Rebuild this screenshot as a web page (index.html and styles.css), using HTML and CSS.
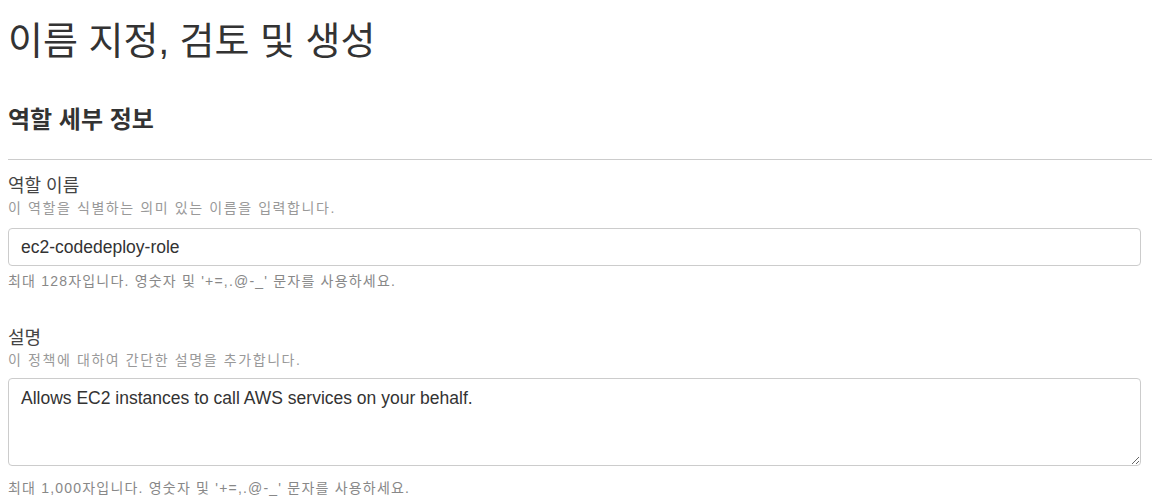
FILE: index.html
```html
<!DOCTYPE html>
<html lang="ko">
<head>
    <meta charset="UTF-8">
    <title>역할 생성</title>
    <link rel="stylesheet" href="styles.css">
</head>
<body>
<div class="page">
    <h1 class="page-title">이름 지정, 검토 및 생성</h1>
    <h2 class="section-title">역할 세부 정보</h2>
    <hr class="divider">
    <div class="field">
        <label class="field-label" for="roleName">역할 이름</label>
        <div class="field-desc">이 역할을 식별하는 의미 있는 이름을 입력합니다.</div>
        <input class="text-input" id="roleName" type="text" value="ec2-codedeploy-role">
        <div class="field-hint">최대 128자입니다. 영숫자 및 '+=,.@-_' 문자를 사용하세요.</div>
    </div>
    <div class="field">
        <label class="field-label" for="roleDesc">설명</label>
        <div class="field-desc">이 정책에 대하여 간단한 설명을 추가합니다.</div>
        <textarea class="text-area" id="roleDesc">Allows EC2 instances to call AWS services on your behalf.</textarea>
        <div class="field-hint field-hint-area">최대 1,000자입니다. 영숫자 및 '+=,.@-_' 문자를 사용하세요.</div>
    </div>
</div>
</body>
</html>
```

FILE: styles.css
```css
* {
    margin: 0;
    padding: 0;
    box-sizing: border-box;
}
body {
    background-color: #fff;
    font-family: "Liberation Sans", "Noto Sans CJK KR", sans-serif;
    color: #444;
}
.page {
    padding-left: 8px;
}
.page-title {
    font-size: 38px;
    font-weight: normal;
    line-height: 46px;
    color: #333;
    padding-top: 18px;
}
.section-title {
    font-size: 24px;
    font-weight: bold;
    line-height: 30px;
    color: #333;
    margin-top: 41px;
}
.divider {
    border: 0;
    border-top: 1px solid #ccc;
    margin-top: 24px;
}
.field {
    margin-right: 11px;
}
.field + .field {
    margin-top: 35px;
}
.field-label {
    display: block;
    font-size: 18px;
    line-height: 24px;
    margin-top: 14px;
    color: #444;
}
.field-desc {
    font-size: 14px;
    line-height: 20px;
    letter-spacing: 1.6px;
    color: #999;
}
.text-input,
.text-area {
    display: block;
    width: 100%;
    font-family: "Liberation Sans", "Noto Sans CJK KR", sans-serif;
    font-size: 17.5px;
    color: #333;
    border: 1px solid #ccc;
    border-radius: 4px;
    background: #fff;
    margin-top: 10px;
}
.text-input {
    height: 38px;
    padding: 0 12px;
}
.text-area {
    height: 88px;
    padding: 9px 12px;
    line-height: 20px;
    resize: vertical;
    margin-top: 8px;
}
.field-hint {
    font-size: 14px;
    line-height: 20px;
    letter-spacing: 1.2px;
    color: #888;
    margin-top: 5px;
}
.field-hint-area {
    margin-top: 12px;
}
```
